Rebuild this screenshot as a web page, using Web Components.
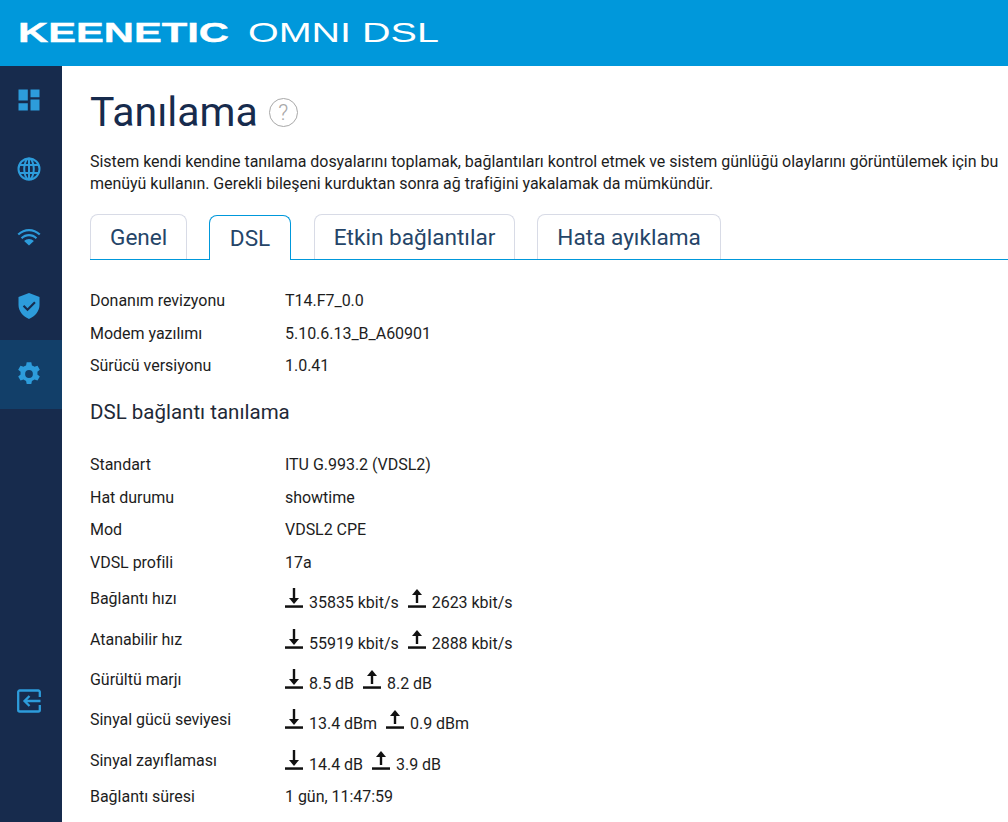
<!DOCTYPE html>
<html>
<head>
<meta charset="utf-8">
<style>
  html, body { margin: 0; height: 822px; overflow: hidden; background: #fff; }
  body { font-family: Roboto, sans-serif; }
</style>
</head>
<body>
<kn-app>
  <kn-header></kn-header>
  <kn-sidebar></kn-sidebar>
  <kn-page>
    <kn-title>Tanılama</kn-title>
    <kn-lead>Sistem kendi kendine tanılama dosyalarını toplamak, bağlantıları kontrol etmek ve sistem günlüğü olaylarını görüntülemek için bu menüyü kullanın. Gerekli bileşeni kurduktan sonra ağ trafiğini yakalamak da mümkündür.</kn-lead>
    <kn-tabs></kn-tabs>
    <kn-row label="Donanım revizyonu">T14.F7_0.0</kn-row>
    <kn-row label="Modem yazılımı">5.10.6.13_B_A60901</kn-row>
    <kn-row label="Sürücü versiyonu">1.0.41</kn-row>
    <kn-subtitle>DSL bağlantı tanılama</kn-subtitle>
    <kn-row label="Standart">ITU G.993.2 (VDSL2)</kn-row>
    <kn-row label="Hat durumu">showtime</kn-row>
    <kn-row label="Mod">VDSL2 CPE</kn-row>
    <kn-row label="VDSL profili">17a</kn-row>
    <kn-row tall label="Bağlantı hızı"><kn-rate down="35835 kbit/s" up="2623 kbit/s"></kn-rate></kn-row>
    <kn-row tall label="Atanabilir hız"><kn-rate down="55919 kbit/s" up="2888 kbit/s"></kn-rate></kn-row>
    <kn-row tall label="Gürültü marjı"><kn-rate down="8.5 dB" up="8.2 dB"></kn-rate></kn-row>
    <kn-row tall label="Sinyal gücü seviyesi"><kn-rate down="13.4 dBm" up="0.9 dBm"></kn-rate></kn-row>
    <kn-row tall label="Sinyal zayıflaması"><kn-rate down="14.4 dB" up="3.9 dB"></kn-rate></kn-row>
    <kn-row label="Bağlantı süresi">1 gün, 11:47:59</kn-row>
  </kn-page>
</kn-app>
<script>
class KnApp extends HTMLElement {
  constructor() {
    super();
    this.attachShadow({mode: 'open'}).innerHTML = `
      <style>
        :host { display: grid; grid-template: 66px 756px / 62px 946px; width: 1008px; height: 822px; overflow: hidden; }
        ::slotted(kn-header) { grid-column: 1 / 3; }
      </style>
      <slot></slot>`;
  }
}
customElements.define('kn-app', KnApp);

class KnHeader extends HTMLElement {
  constructor() {
    super();
    this.attachShadow({mode: 'open'}).innerHTML = `
      <style>
        :host { display: flex; align-items: center; background: #0098db; color: #fff; height: 66px; padding-left: 17.500px; overflow: hidden; }
        span { display: block; font-family: "Liberation Sans", sans-serif; font-size: 28px; line-height: 28px; white-space: nowrap; transform-origin: 0 50%; }
        .brand { font-weight: 700; width: 210px; transform: scaleX(1.49); -webkit-text-stroke: .4px #fff; }
        .model { font-weight: 400; margin-left: 20px; width: 190px; transform: scaleX(1.41); }
      </style>
      <span class="brand">KEENETIC</span><span class="model">OMNI DSL</span>`;
  }
}
customElements.define('kn-header', KnHeader);

class KnSidebar extends HTMLElement {
  constructor() {
    super();
    this.attachShadow({mode: 'open'}).innerHTML = `
      <style>
        :host { display: flex; flex-direction: column; background: #172b4d; color: #2d9cdb; height: 756px; }
        div { height: 68.500px; display: flex; align-items: center; justify-content: center; flex: none; padding-right: 5px; }
        .active { background: #123f69; }
        .exit { margin-top: 258px; }
        svg { width: 24px; height: 24px; fill: currentColor; display: block; overflow: visible; }
      </style>
      <div><svg viewBox="0 0 24 24"><path d="M1.500 1.500h9.300v11H1.500zM13.500 1.500h9v7.700h-9zM13.500 11.500h9v11h-9zM1.500 15.200h9.300v7.300H1.500z"/></svg></div>
      <div><svg viewBox="0 0 24 24" style="fill:none;stroke:currentColor;stroke-width:2"><circle cx="12" cy="12" r="10.500"/><ellipse cx="12" cy="12" rx="4.800" ry="10.500"/><path d="M12 1.500v21M2.500 8h19M2.500 16h19"/></svg></div>
      <div><svg viewBox="0 0 24 24"><path d="M12 4c4.200 0 8 1.700 11.500 4.800l-1.500 1.500C19 7.700 15.700 6.200 12 6.200S5 7.700 2 10.300L.5 8.800C4 5.700 7.800 4 12 4zM12 9c3 0 5.800 1.200 8.200 3.400l-1.500 1.500C16.800 12.200 14.500 11.200 12 11.200s-4.800 1-6.700 2.700l-1.500-1.500C6.200 10.200 9 9 12 9zM12 14c1.800 0 3.500.7 4.900 2L12 20.500 7.100 16c1.400-1.300 3.100-2 4.900-2z"/></svg></div>
      <div><svg viewBox="0 0 24 24"><path fill-rule="evenodd" d="M12-1 22.500 3v8c0 6-4.200 11.300-10.500 14C5.700 22.300 1.500 17 1.500 11V3zM17.200 7.500 10.500 14.200 7.300 11 5.800 12.500l4.700 4.700L18.700 9z"/></svg></div>
      <div class="active"><svg viewBox="0 0 24 24"><path fill-rule="evenodd" transform="translate(12 12) scale(1.050) translate(-12 -12)" d="M9.800 .8h4.400l.6 3c.9.300 1.700.8 2.400 1.300l2.900-1 2.200 3.800-2.300 2c.1.900.1 1.700 0 2.600l2.300 2-2.200 3.800-2.900-1c-.7.500-1.500 1-2.400 1.300l-.6 3H9.800l-.6-3c-.9-.3-1.700-.8-2.400-1.300l-2.900 1-2.200-3.800 2.300-2c-.1-.9-.1-1.700 0-2.600l-2.300-2 2.200-3.800 2.900 1c.7-.5 1.500-1 2.400-1.300zM12 8.300a3.700 3.700 0 1 0 0 7.400 3.700 3.700 0 0 0 0-7.400z"/></svg></div>
      <div class="exit"><svg viewBox="0 0 24 24" style="fill:none;stroke:currentColor;stroke-width:2.300"><path d="M22.800 8V3a1.500 1.500 0 0 0-1.500-1.500H2.700A1.500 1.500 0 0 0 1.200 3v18a1.500 1.500 0 0 0 1.500 1.500h18.600a1.500 1.500 0 0 0 1.500-1.500v-5"/><path d="M23.500 12H7.500M12.500 7 7.500 12l5 5"/></svg></div>`;
  }
}
customElements.define('kn-sidebar', KnSidebar);

class KnPage extends HTMLElement {
  constructor() {
    super();
    this.attachShadow({mode: 'open'}).innerHTML = `
      <style>
        :host { display: block; padding: 0 0 0 28px; height: 756px; overflow: hidden; color: #1d1d1d; font: 16px/22px Roboto, sans-serif; letter-spacing: -.025px; }
      </style>
      <slot></slot>`;
  }
}
customElements.define('kn-page', KnPage);

class KnTitle extends HTMLElement {
  constructor() {
    super();
    this.attachShadow({mode: 'open'}).innerHTML = `
      <style>
        :host { display: flex; align-items: center; gap: 11px; height: 48px; padding-top: 21.500px; margin-bottom: 15.500px; color: #172b4d; font-size: 41px; font-weight: 400; line-height: 48px; letter-spacing: 0; }
        i { width: 27px; height: 27px; border: 1px solid #a8a8a8; border-radius: 50%; color: #a8a8a8; font: 300 22px/27px Roboto, sans-serif; text-align: center; margin-top: 1px; }
      </style>
      <slot></slot><i>?</i>`;
  }
}
customElements.define('kn-title', KnTitle);

class KnLead extends HTMLElement {
  constructor() {
    super();
    this.attachShadow({mode: 'open'}).innerHTML = `
      <style>:host { display: block; width: 912px; margin-bottom: 19px; }</style>
      <slot></slot>`;
  }
}
customElements.define('kn-lead', KnLead);

class KnTabs extends HTMLElement {
  constructor() {
    super();
    this.attachShadow({mode: 'open'}).innerHTML = `
      <style>
        :host { display: flex; gap: 22px; box-sizing: border-box; height: 46px; border-bottom: 1px solid #0098db; margin-bottom: 24.750px; font-size: 22.600px; color: #254568; letter-spacing: 0; }
        div { box-sizing: border-box; height: 45px; line-height: 45px; padding: 0 19px; border: 1px solid #d8dbe6; border-bottom: 0; border-radius: 8px 8px 0 0; white-space: nowrap; }
        div:nth-child(1) { padding-right: 17.500px; }
        div:nth-child(3) { padding: 0 19.500px; }
        div:nth-child(4) { margin-left: 1px; }
        .on { border-color: #0098db; background: #fff; height: 45px; margin-top: 1px; position: relative; z-index: 1; }
      </style>
      <div>Genel</div><div class="on">DSL</div><div>Etkin bağlantılar</div><div>Hata ayıklama</div>`;
  }
}
customElements.define('kn-tabs', KnTabs);

class KnRow extends HTMLElement {
  constructor() {
    super();
    this.attachShadow({mode: 'open'}).innerHTML = `
      <style>
        :host { display: grid; grid-template-columns: 195px auto; justify-content: start; align-items: center; height: 32.500px; }
        :host([tall]) { height: 40.400px; }
      </style>
      <span></span><div><slot></slot></div>`;
    this.shadowRoot.querySelector('span').textContent = this.getAttribute('label');
  }
}
customElements.define('kn-row', KnRow);

class KnSubtitle extends HTMLElement {
  constructor() {
    super();
    this.attachShadow({mode: 'open'}).innerHTML = `
      <style>:host { display: block; height: 26px; line-height: 26px; font-size: 20.500px; padding: 16.500px 0 24.250px; color: #1f2937; letter-spacing: 0; }</style>
      <slot></slot>`;
  }
}
customElements.define('kn-subtitle', KnSubtitle);

class KnRate extends HTMLElement {
  constructor() {
    super();
    const down = '<rect x="7.800" y="0" width="2.400" height="11"/><path d="M4 10h10l-5 6z"/>';
    const up = '<path d="M9 1 4 7h10z"/><rect x="7.800" y="6" width="2.400" height="9"/>';
    const icon = p => `<svg width="18" height="21" viewBox="0 0 18 21" fill="#111">${p}<rect y="17.300" width="18" height="2.500"/></svg>`;
    this.attachShadow({mode: 'open'}).innerHTML = `
      <style>
        :host { display: flex; align-items: center; white-space: nowrap; }
        svg { display: block; margin-right: 6px; margin-top: -1px; flex: none; }
        span { margin-right: 9px; margin-top: 8px; }
      </style>
      ${icon(down)}<span>${this.getAttribute('down')}</span>${icon(up)}<span>${this.getAttribute('up')}</span>`;
  }
}
customElements.define('kn-rate', KnRate);
</script>
</body>
</html>
